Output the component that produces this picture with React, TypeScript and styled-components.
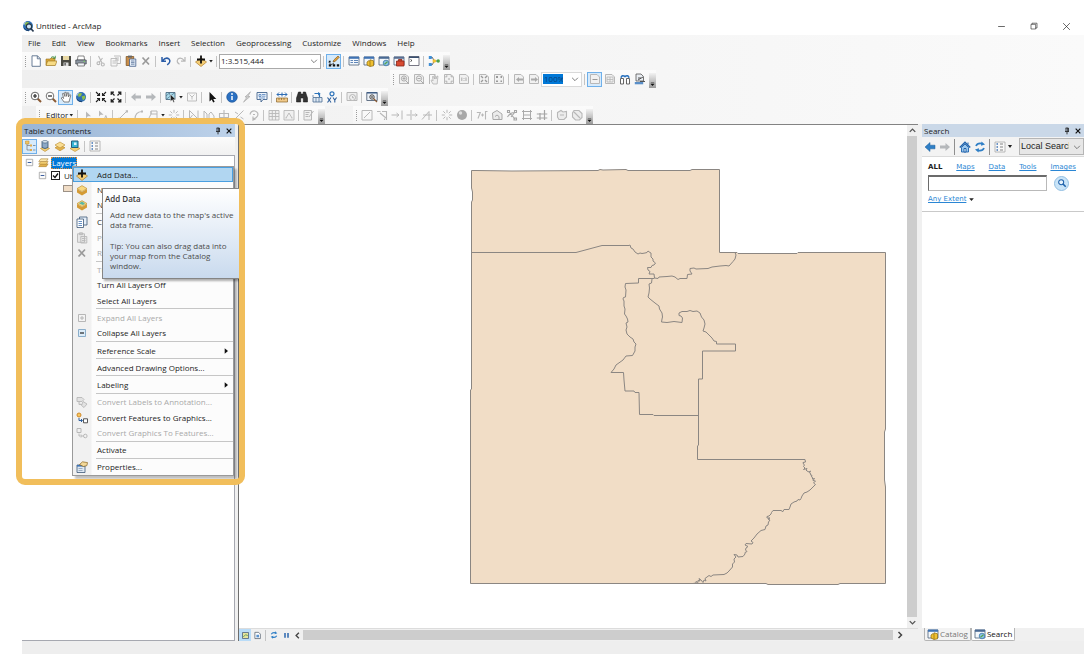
import React from "react";
import styled, { createGlobalStyle, css } from "styled-components";

const UI = `"Open Sans", "Noto Sans", sans-serif`;
const BLUE = "#0078d7";
const G = "#b8b8b8";

const Global = createGlobalStyle`
  *, *::before, *::after { box-sizing: border-box; }
  html, body { margin: 0; background: #fff; }
  body { font: 8px/12px ${UI}; color: #1c1c1c; overflow: hidden; }
  button, input, select { font: inherit; color: inherit; margin: 0; padding: 0; border: 0; background: none; }
  svg { display: block; flex: none; }
`;

/* ---------- icons, all drawn on a 12 x 12 grid ---------- */

const layer = (y: number, fill = "#f3cf73") => (
  <path d={`M1 ${y} L6 ${y - 3} L11 ${y} L6 ${y + 3}Z`} fill={fill} stroke="#b98a2c" strokeWidth=".6" />
);
const win = (c = "#3f73b4") => (
  <>
    <path d="M1 2h10v8H1z" fill="#f4f8fc" stroke="#4b5f7a" strokeWidth=".8" />
    <path d="M1 1.6h10v2.2H1z" fill={c} />
  </>
);
const greyPage = <path d="M1.5 1.5h6.5l2.5 2.5v6.5h-9z" fill="#f1f1f1" stroke={G} />;
const globe = (
  <>
    <circle cx="6" cy="6" r="5" fill="#2f6fb5" />
    <path d="M3 3.2Q5 1.4 7 2.4L6 5 3.6 6zM6.6 5.6l3.2-1.2.6 2.6-2.4 2.6z" fill="#8fbf4a" />
    <path d="M1.8 8Q3.500 10.800 7 10.800" stroke="#173f6e" strokeWidth="1" fill="none" />
    <path d="M4 1.6Q2 3 1.8 5" stroke="#cfe2f5" strokeWidth=".8" fill="none" />
  </>
);

const icons: Record<string, React.ReactNode> = {
  newDoc: <path d="M2 .8h5.5L10.300 3.600v7.700H2zM7.300 .8v3h3" fill="#fff" stroke="#5a6f8c" strokeWidth=".9" />,
  open: (
    <>
      <path d="M1 4h4l1-1h4v7H1z" fill="#d9a93b" stroke="#97701c" strokeWidth=".6" />
      <path d="M1 10.500 2.600 6H12l-1.700 4.500z" fill="#f8dc86" stroke="#97701c" strokeWidth=".6" />
      <path d="M6 2.500Q8 .8 9.500 2.400M10.300 .8v2.400H8" fill="none" stroke="#2c8a3c" strokeWidth=".8" />
    </>
  ),
  save: (
    <>
      <path d="M1 1h10v10H1z" fill="#4a4a43" />
      <path d="M3 1h6v4H3z" fill="#e9d9a4" />
      <path d="M3.500 7.500h5V11h-5z" fill="#dedede" />
      <path d="M4.500 8h1.200v2.500H4.500z" fill="#444" />
    </>
  ),
  print: (
    <>
      <path d="M3 1h6l.6 4H2.400z" fill="#fff" stroke="#555" strokeWidth=".7" />
      <path d="M.8 5h10.400v4H.8z" fill="#8d98a4" stroke="#4a4f55" strokeWidth=".8" />
      <path d="M2.600 8h6.800v3H2.600z" fill="#f3f6fa" stroke="#555" strokeWidth=".7" />
      <path d="M8.500 6.300h1.500" stroke="#79d35c" />
    </>
  ),
  cut: (
    <g fill="none" stroke={G} strokeWidth="1.100">
      <path d="M3.500 1 7 8M7.500 3 4 7.500" /><circle cx="3.400" cy="8.200" r="1.400" /><circle cx="7.800" cy="9.500" r="1.500" />
    </g>
  ),
  copyGrey: <path d="M1 3.500h6v7.500H1zM4 1h6.500v7.500H7M5 3h4M5 5h4M2.500 6H6M2.500 8H6" fill="none" stroke={G} strokeWidth=".9" />,
  paste: (
    <>
      <path d="M1.200 1.500h7.500v9H1.200z" fill="#c98e4a" stroke="#7d5526" strokeWidth=".8" />
      <path d="M3 .6h4v2H3z" fill="#666" />
      <path d="M4.500 4h6.300v7.300H4.500z" fill="#e8f0fa" stroke="#44608a" strokeWidth=".8" />
      <path d="M6 6h3.500M6 7.600h3.500M6 9.200h3.500" stroke="#44608a" strokeWidth=".7" />
    </>
  ),
  pasteGrey: <path d="M1.500 1.800h7v8.500h-7zM3.500 .8h3v1.800h-3zM4.800 4.500h6v6.500h-6zM6 6.500h3.500M6 8.500h3.500" fill="#e6e6e6" stroke={G} strokeWidth=".9" />,
  remove: <path d="M2.500 2.500l6.500 7M9 2.500l-6.500 7" stroke="#9a9a9a" strokeWidth="1.700" />,
  undo: <path d="M2 2v4.200h4M2.500 5.800Q6 1.600 9 4q2.400 2.800-1.800 5.800" fill="none" stroke="#2b5da8" strokeWidth="1.500" />,
  redo: <path d="M10 2v4.200H6M9.500 5.800Q6 1.600 3 4 .8 6.800 4.500 9.300" fill="none" stroke={G} strokeWidth="1.200" />,
  addData: (
    <>
      <path d="M.5 7 6 3l5.500 4L6 11.500z" fill="#f5ce76" stroke="#b17c26" strokeWidth=".7" />
      <path d="M6 .5v8M2 4.500h8" stroke="#111" strokeWidth="1.800" />
    </>
  ),
  editorBar: (
    <>
      <path d="M1 7.500 3 9.500 6 8.500" fill="none" stroke="#333" strokeWidth=".8" />
      <path d="M.8 9.200h2.400v2.200H.8zM4.800 9.200h2.400v2.200H4.800zM8.800 9.200h2.400v2.200H8.800zM.8 5.800h1.800v1.800H.8z" fill="#111" />
      <path d="M5 7 5.800 5 10 1l1.300 1.200L7.200 6.400z" fill="#e8a33a" stroke="#6b4a18" strokeWidth=".6" />
    </>
  ),
  tocWin: <>{win()}<path d="M2.500 5.500h2.500M6 5.500h4M2.500 7.500h2.500M6 7.500h4" stroke="#5f86b9" /></>,
  catalogWin: (
    <>
      {win()}
      <path d="M4 7l2-1.500 1 .8V4.800l3.500 1v5L7 11.500 4 10z" fill="#f0c132" stroke="#8c6a10" strokeWidth=".7" />
      <path d="M7 6.500v4.800" stroke="#8c6a10" strokeWidth=".7" />
    </>
  ),
  searchWin: <>{win("#4a6a94")}<circle cx="8" cy="8" r="2.800" fill="#8cc4e8" stroke="#3f78a8" strokeWidth=".8" /><path d="M6.500 9.200l3-2.500" stroke="#5aa34c" strokeWidth="1.200" /></>,
  toolbox: <>{win("#5a6f92")}<path d="M3.500 6h7.500v5H3.500zM5.500 6V4.500h3.500V6" fill="#d84b32" stroke="#8a2416" strokeWidth=".8" /></>,
  python: <><path d="M1 1.500h10v9H1z" fill="#fff" stroke="#556" strokeWidth=".8" /><path d="M1 1.500h10v1.500H1z" fill="#39506f" /><path d="M2.500 4.500 4 5.500 2.500 6.500" fill="none" stroke="#222" strokeWidth=".8" /></>,
  model: (
    <>
      <path d="M2.500 2.500h2L6 6 4.500 9.500h-2M6 6h4" fill="none" stroke="#444" strokeWidth=".8" />
      <path d="M.8 1h3v3h-3zM.8 8h3v3h-3z" fill="#3f8fd6" /><circle cx="6.300" cy="6" r="1.800" fill="#f0c132" /><circle cx="10.200" cy="6" r="1.700" fill="#4fa045" />
    </>
  ),
  zoomIn: <><path d="M7.500 7.500 11 11" stroke="#8a5a34" strokeWidth="1.900" /><circle cx="5" cy="5" r="3.800" fill="#fff" stroke="#555" strokeWidth=".9" /><path d="M5 3v4M3 5h4" stroke="#222" strokeWidth="1.200" /></>,
  zoomOut: <><path d="M7.500 7.500 11 11" stroke="#8a5a34" strokeWidth="1.900" /><circle cx="5" cy="5" r="3.800" fill="#fff" stroke="#666" strokeWidth=".9" /><path d="M3 5h4" stroke="#222" strokeWidth="1.200" /></>,
  pan: <path d="M4 11 1.200 7 2.300 6.300 3.600 7.500 2.500 2.600l1.300-.3L5 5.500 4.800 1.300h1.400L6.600 5.300 7.500 1.700l1.300.3L8.400 6 9.800 3.600l1 .6L9.500 9 9 11z" fill="#fff" stroke="#666" strokeWidth=".8" />,
  globe,
  fixedIn: <path d="M1 1l3 3M11 1 8 4M1 11l3-3M11 11 8 8M4.500 2v2.500H2M7.500 2v2.500H10M4.500 10V7.500H2M7.500 10V7.500H10" fill="none" stroke="#222" strokeWidth="1.100" />,
  fixedOut: <path d="M1.500 1.500l3 3M10.500 1.500l-3 3M1.500 10.500l3-3M10.500 10.500l-3-3M1.200 4V1.200H4M8 1.200h2.800V4M1.200 8v2.800H4M8 10.800h2.800V8" fill="none" stroke="#222" strokeWidth="1.200" />,
  back: <path d="M1 6l4.500-4v2.500H11v3H5.500V10z" fill="#b5b8bb" />,
  fwd: <path d="M11 6 6.500 2v2.500H1v3h5.500V10z" fill="#b5b8bb" />,
  backBlue: <path d="M1 6l5-4.500v2.700h5v3.600H6v2.700z" fill="#2f7fc6" stroke="#1b5c98" strokeWidth=".5" />,
  selFeat: <><path d="M1 1.500h9v7H1z" fill="#a9dcec" stroke="#4d6d85" strokeWidth=".9" /><path d="M1 5 5 1.500M1 8.500 10 1.500M4 1.500l3 7" stroke="#4d6d85" strokeWidth=".7" /><path d="M5.500 3.500v7l1.800-1.700 1.200 2.700 1-.5-1-2.500h2.300z" fill="#222" stroke="#fff" strokeWidth=".4" /></>,
  clearSel: <path d="M1.500 2h9v8h-9zM3.500 3.500 6 6l2.500-2.500M6 6v2.500" fill="none" stroke={G} strokeWidth=".9" />,
  pointer: <path d="M3.500 1v9.500L5.700 8.400 7.200 11.500l1.500-.7L7.300 7.900h3z" fill="#111" />,
  info: <><circle cx="6" cy="6" r="5.300" fill="#2a70c2" stroke="#174d8e" strokeWidth=".6" /><path d="M6 5v4" stroke="#fff" strokeWidth="1.500" /><circle cx="6" cy="3" r=".9" fill="#fff" /></>,
  bolt: <path d="M9.500 .8 4 6h2L2.500 11.200 9 5.500H6.800z" fill="#d2d2d2" stroke="#a2a2a2" strokeWidth=".6" />,
  popup: <><path d="M1 1.500h10v7H7l-2 2.500V8.500H1z" fill="#eef4fb" stroke="#456690" strokeWidth=".9" /><path d="M3 3.500h2v2H3zM6 3.500h3.500M6 5.200h3.500M3 7h6" stroke="#3f73b4" fill="none" strokeWidth=".7" /></>,
  measure: <><path d="M.5 7h11v4H.5z" fill="#f0c98a" stroke="#8a6428" strokeWidth=".7" /><path d="M3 7v2M5.500 7v2M8 7v2" stroke="#8a6428" strokeWidth=".7" /><path d="M1 3.500h10M3 1.500l-2 2 2 2M9 1.500l2 2-2 2M6 1.500v4" fill="none" stroke="#2e6db5" /></>,
  binoc: <path d="M2.500 1h2.300v2h2.400V1h2.300l2 6v4H7.300V7H4.700v4H.5V7z" fill="#333" stroke="#111" strokeWidth=".5" />,
  route: <><path d="M3.500 2.500h5V6" fill="none" stroke="#2d74bb" strokeWidth="1.200" /><path d="M7 1l2.500 1.500L7 4.500" fill="#2d74bb" /><path d="M2 6.500h9v4.500H2z" fill="#dfeaf5" stroke="#4b6d93" strokeWidth=".8" /><path d="M5 6.500V11M8 6.500V11M2 4v2" stroke="#4b6d93" strokeWidth=".7" /></>,
  gotoXY: <><circle cx="6" cy="2.800" r="2" fill="none" stroke="#2d74bb" strokeWidth="1.200" /><path d="M1.500 6.500l3.500 5M5 6.500l-3.500 5M7 6.500 8.800 9l1.800-2.500M8.800 9v2.500" fill="none" stroke="#2d5f9c" strokeWidth="1.100" /></>,
  timeGrey: <><path d="M1 1.500h10v8H1z" fill="#eee" stroke={G} /><circle cx="6.500" cy="6.500" r="3" fill="#eee" stroke={G} /><path d="M6.500 5v1.800H8" fill="none" stroke={G} /></>,
  viewer: <><path d="M.8 1.500h10.400v8H.8z" fill="#edf2f8" stroke="#55657b" strokeWidth=".9" /><path d="M.8 1.200h10.400v1.300H.8z" fill="#3b5a85" /><circle cx="6" cy="6" r="2.200" fill="#fff" stroke="#333" strokeWidth=".9" /><path d="M6 4.800v2.400M4.800 6h2.400" stroke="#333" strokeWidth=".7" /><path d="M7.500 7.500 11 11" stroke="#8a5a34" strokeWidth="1.300" /></>,
  pageZoomIn: <>{greyPage}<circle cx="6" cy="5.500" r="2.600" fill="none" stroke="#aaa" /><path d="M6 4v3M4.500 5.500h3M8 8l3 3" stroke="#aaa" /></>,
  pageZoomOut: <>{greyPage}<circle cx="6" cy="5.500" r="2.600" fill="none" stroke="#aaa" /><path d="M4.500 5.500h3M8 8l3 3" stroke="#aaa" /></>,
  pagePan: <><path d="M1.500 11V1.500h6" fill="none" stroke={G} /><path d="M5 11 3 7.500l1-.6 1 1L4.500 3.500h1L6.500 6 6.300 2.500h1L8 6l1-3 1 .3L9.500 7l-.3 4z" fill="#eee" stroke="#aaa" strokeWidth=".7" /></>,
  pageFull: <>{greyPage}<path d="M3 4.500V3h1.500M7.500 3H9v1.500M3 7.500V9h1.500M7.500 9H9V7.500M5 6h2" fill="none" stroke="#aaa" /></>,
  page11: <>{greyPage}<path d="M3.800 4.500v3.500M8 4.500v3.500M6 5.200v.8M6 7v.8" stroke="#aaa" /></>,
  pageIn: <>{greyPage}<path d="M3 3l2 2M9 3 7 5M3 9l2-2M9 9 7 7" stroke="#999" strokeWidth="1.300" /></>,
  pageOut: <>{greyPage}<path d="M3 3h2v2H3zM7.500 3h1.500v2H7.500zM3 7.500h2V9H3zM7.500 7.500H9V9H7.500z" fill="#999" /></>,
  pageBack: <>{greyPage}<path d="M3 6.500l3-2.500v1.500h4v2H6V9z" fill="#aaa" /></>,
  pageFwd: <>{greyPage}<path d="M10 6.500 7 4v1.500H3v2h4V9z" fill="#aaa" /></>,
  draft: <>{greyPage}<path d="M3.500 6.500h5" stroke="#999" /></>,
  focus: <>{greyPage}<path d="M3 4h6v5H3zM3 6.500h6M6 4v5" fill="none" stroke={G} strokeWidth=".8" /></>,
  layoutSwap: <><path d="M1.500 11V5.500h3V11zM7.500 11V5.500h3V11z" fill="#fff" stroke="#555" strokeWidth=".9" /><path d="M2 4.800Q3 1.500 6 3.500 9 1.500 10 4.800" fill="none" stroke="#2a72be" strokeWidth="1.600" /></>,
  ddp: <><path d="M2 1h5l2.500 2.500V8H2z" fill="#e9edf2" stroke="#555" strokeWidth=".8" /><path d="M.8 9h8.400v2.300H.8z" fill="#5a8fc8" /><path d="M4 7l5-3M6 8.500h5M4 5h3" stroke="#555" /></>,
  eTool: <path d="M4 2.500v7l1.800-2.200H9z" fill={G} />,
  eToolA: <><path d="M2 1.500v6l1.600-1.800h3z" fill={G} /><path d="M7 11l1.800-4.500L10.600 11M7.500 9.500h2.500" fill="none" stroke={G} /></>,
  line: <><path d="M2.500 9.500l7-7" stroke={G} /><path d="M1.200 8.800h2.200V11H1.200zM8.800 1.200H11v2.200H8.800z" fill={G} /></>,
  arc: <><path d="M3 10Q3 3 10 2.500" fill="none" stroke={G} strokeWidth="1.100" /><path d="M2 9h2v2H2zM9 1.500h2v2H9z" fill={G} /></>,
  trace: <path d="M1 10h9V2H4v3L1.500 10M4 2v3h6M2 9v2M10 9v2" fill="none" stroke={G} />,
  burst: <path d="M6 .8v3M6 8.200v3M.8 6h3M8.200 6h3M2.300 2.300l2 2M7.700 7.700l2 2M9.700 2.300l-2 2M4.300 7.700l-2 2" stroke={G} />,
  editVert: <path d="M1.500 11V1.500L10 10V1.500M4.500 6 1.500 10H10" fill="none" stroke={G} />,
  reshape: <path d="M1 10.500V2l3 3v5.500M6 10.500V5l2-2 3 4v3.500" fill="none" stroke={G} />,
  cutPoly: <path d="M1.500 4.500h9v4h-9zM6 1v10.500" fill="none" stroke={G} strokeWidth="1.100" />,
  split: <path d="M1.500 10.500l9-9M2 3l3 2M7.500 8l3 2" stroke={G} />,
  rotate: <path d="M2 5.500Q3 1.500 7 2q4 1.500 2.500 5Q8 10 5 9.500M5 7.500v3.500L8 9.500M5 5.500h2" fill="none" stroke={G} strokeWidth="1.200" />,
  table: <path d="M1 1.500h10v9.500H1zM1 4.500h10M1 7.500h10M4.300 1.500V11M7.600 1.500V11" fill="#f0f0f0" stroke={G} strokeWidth=".9" />,
  sketchProp: <path d="M1 1.500h10v9.500H1zM3 9l3-5 3 5M2.500 9h1M8.500 9h1" fill="#f0f0f0" stroke={G} strokeWidth=".9" />,
  createFeat: <path d="M1 1.500h7.500v9.500H1zM2.500 3.500h4M2.500 5.500h3M2.500 7.500h3M6 8l4.500-6" fill="#f0f0f0" stroke={G} />,
  t1: <path d="M1 1.500h10v9.500H1zM3 9l6-6" fill="none" stroke={G} />,
  t2: <path d="M1 2.500h3.500M6 2.500h4.500V11M8.500 9.500V11M4 4l6 5" fill="none" stroke={G} strokeWidth="1.100" />,
  t3: <path d="M.5 6h7M5.500 4l2.500 2-2.500 2M11 1.500v9" fill="none" stroke={G} />,
  t4: <path d="M5 1v10M.5 6h4M6 6h5.500M9.500 4.500 11 6 9.500 7.500" fill="none" stroke={G} />,
  t5: <path d="M1 10.500l7-8M2 6h9M8 2.500V11" fill="none" stroke={G} />,
  sphere: <><circle cx="6" cy="6" r="5" fill="#a8a8a8" /><circle cx="4.500" cy="4" r="1.700" fill="#dedede" /></>,
  text7: <path d="M.8 3.500h3.500L2 9.500M5 6h3M6.500 4.500v3M11.500 2.500H9.500v8" fill="none" stroke={G} strokeWidth="1.100" />,
  bookA: <path d="M1.500 4 6 1.500 11 5v5.500H2zM4 7.500q2-3 4 0v3" fill="#ececec" stroke="#aaa" />,
  nodes: <path d="M1.500 1.500h2v2h-2zM8.500 1.500h2v2h-2zM8 9h2.500v2H8zM3 3l6 7M9 3 5 8M1.500 8q3-5 8-4.500" fill="none" stroke="#a5a5a5" strokeWidth="1.100" />,
  rect4: <path d="M2.500 1v10M9.500 1v10M1 2.500h10M1 9.500h10M3 6h6" fill="none" stroke="#aaa" />,
  hash: <path d="M4 4v7M8.500 1v10M.8 5h10.500M.8 9h10.500" fill="none" stroke="#a5a5a5" strokeWidth="1.200" />,
  poly1: <path d="M1.500 3.500 5 1.500l2 1.500 3.500-.5V8L8 10.500H3L1.500 8zM4 6h4" fill="#ececec" stroke={G} strokeWidth="1.100" />,
  poly2: <path d="M3 1.500h5l3 3v4L8.500 11h-4L1.500 8V4zM3 3l6 6" fill="#ececec" stroke={G} strokeWidth="1.100" />,
  listOrder: <><path d="M3 3v7h3M3 5.500h3" fill="none" stroke="#777" strokeWidth=".7" /><path d="M1.500 1h3.500v3H1.500z" fill="#f0c468" stroke="#b98a2c" strokeWidth=".5" /><path d="M6 4.500h2v2H6zM6 9h2v2H6z" fill="#e0a94c" /><path d="M9 5.500h2.500M9 10h2.500" stroke="#7c93ac" /></>,
  listSource: <><path d="M1.500 8.500 6 6l4.500 2.500L6 11.500z" fill="#f3cf73" stroke="#b98a2c" strokeWidth=".6" /><path d="M3 1.500h6v6Q6 9.500 3 7.500z" fill="#8da9c6" stroke="#33506f" strokeWidth=".8" /><ellipse cx="6" cy="1.800" rx="3" ry="1.200" fill="#e8f2fa" stroke="#33506f" strokeWidth=".6" /></>,
  listVis: <>{layer(7.800, "#e2b24d")}{layer(5, "#f9dd92")}</>,
  listSel: <><path d="M1 8.500 6 6l5 2.500-5 3z" fill="#f3cf73" stroke="#b98a2c" strokeWidth=".6" /><path d="M2.500 1H9v6.500H2.500z" fill="#38b6d4" stroke="#245e7d" /><path d="M5 2.500h2.500v2.500H5z" fill="#dff3fa" /></>,
  options: <><path d="M1 1h10v10H1z" fill="#f8f8f8" stroke="#a8a8a8" strokeWidth=".8" /><path d="M2.500 3h1.500M2.500 6h1.500M2.500 9h1.500" stroke="#3f73b4" strokeWidth="1.400" /><path d="M6 3h3M6 6h3M6 9h3" stroke="#777" strokeWidth=".9" /></>,
  layers: <><path d="M.8 10.500 3 7.500h8l-2 3z" fill="#e2b24d" stroke="#a67a2a" strokeWidth=".6" /><path d="M.8 7.800 3 4.800h8l-2 3z" fill="#f3cf73" stroke="#a67a2a" strokeWidth=".6" /><path d="M.8 5 3 2h8L9 5z" fill="#fbe6aa" stroke="#a67a2a" strokeWidth=".6" /></>,
  groupLayer: <><path d="M1 5 6 8v3.500L1 8.500zM11 5 6 8v3.500l5-3z" fill="#d49b35" />{layer(4.600, "#f8d880")}</>,
  baseLayer: <><path d="M1 5 6 8v3.500L1 8.500zM11 5 6 8v3.500l5-3z" fill="#d49b35" />{layer(4.600, "#f8d880")}<path d="M3 4.600l3-2 3 1.800-2 1.500z" fill="#58b6a6" /></>,
  copy: <><path d="M3.500 1H11v8H3.500z" fill="#e5eef8" stroke="#3d5877" strokeWidth=".8" /><path d="M1 3h6.500v8.500H1z" fill="#fff" stroke="#3d5877" strokeWidth=".8" /><path d="M2.500 5.500H6M2.500 7.500H6M2.500 9.500H6" stroke="#3f73b4" strokeWidth=".8" /></>,
  plusBox: <path d="M2.500 2.500h7v7h-7zM6 4v4M4 6h4" fill="#f4f4f4" stroke="#b0b0b0" strokeWidth=".9" />,
  minusBox: <><path d="M2.500 2.500h7v7h-7z" fill="#dcecf8" stroke="#7fa6c6" strokeWidth=".9" /><path d="M4 6h4" stroke="#111" strokeWidth="1.100" /></>,
  treeBox: <><path d="M2.500 2.500h7v7h-7z" fill="#fafafa" stroke="#a3a3a3" strokeWidth=".9" /><path d="M4 6h4" stroke="#3b5fa0" strokeWidth="1.100" /></>,
  convLabel: <path d="M1 1.500h5l2 2-2 2H1zM3 5.500v3h3M7 5.500 11 8 8 11.500 5.500 9.500z" fill="#e2e2e2" stroke={G} strokeWidth=".9" />,
  convFeat: <><circle cx="3" cy="3" r="2" fill="#f8c860" stroke="#d0892a" /><path d="M3 6v2.500h3M5 7l1.500 1.500L5 10" fill="none" stroke="#2d5f9c" /><path d="M7.500 6.800h4v4h-4z" fill="#fff" stroke="#444" strokeWidth=".9" /></>,
  convGraph: <><path d="M1 1.500h4v4H1zM3 6.500v2.500h3M5 7.500 6.500 9 5 10.500" fill="none" stroke={G} /><circle cx="9.300" cy="9" r="1.800" fill="none" stroke={G} /></>,
  props: <><path d="M1 4h8v7.500H1z" fill="#dfe9f4" stroke="#3d5877" strokeWidth=".8" /><path d="M1 4h8v1.600H1z" fill="#3f73b4" /><path d="M2.500 7.500h4M2.500 9.500h4" stroke="#7c93ac" strokeWidth=".7" /><path d="M3.500 3.500 6.500 .8l5 .8-.6 3-3.400.9z" fill="#f3d99a" stroke="#8a6420" strokeWidth=".7" /></>,
  home: <><path d="M.8 6.500 6 1.200l5.200 5.300" fill="none" stroke="#1f63ac" strokeWidth="1.500" /><path d="M2.500 6.500 6 3l3.500 3.500V11h-7z" fill="#9cc8ee" stroke="#1f63ac" strokeWidth=".9" /><path d="M5 7.500h2V11H5zM9 1.500v2" fill="#fff" stroke="#1f63ac" /></>,
  refresh: <><path d="M2 5Q3.500 1.500 8 2.600" fill="none" stroke="#2f7fc6" strokeWidth="1.700" /><path d="M7.500 .5l3.500 3-4 1.300z" fill="#2f7fc6" /><path d="M10 7Q8.500 10.500 4 9.400" fill="none" stroke="#2f7fc6" strokeWidth="1.700" /><path d="M4.500 11.500 1 8.500l4-1.300z" fill="#2f7fc6" /></>,
  pause: <path d="M3 2.500h2v6.500H3zM7 2.500h2v6.500H7z" fill="#2a66ad" />,
  dataView: <><path d="M2 2h8v8H2z" fill="#e7e39b" stroke="#44597a" /><path d="M3 8l3-3 3 1" fill="none" stroke="#3d8a52" /></>,
  layoutView: <><path d="M2.500 1.800h5l2.300 2.300v6H2.500z" fill="#fff" stroke="#55606e" /><path d="M4.500 5h3.500v3.500H4.500z" fill="#5b93cf" /></>,
  find: <><circle cx="5" cy="5" r="3" fill="#e7f3fc" stroke="#1f63ac" strokeWidth="1.300" /><path d="M7.200 7.200 10.500 10.500" stroke="#1f63ac" strokeWidth="1.900" /></>,
  pin: <path d="M4 1.500h4M4.500 1.500v5M7.200 1.500v5M8 1.500v5M3 6.800h6M6 7v4" fill="none" stroke="#111" strokeWidth="1.200" />,
  close: <path d="M2.500 2.500l7 7M9.500 2.500l-7 7" stroke="#111" strokeWidth="1.800" />,
  winMin: <path d="M1.500 6h9" stroke="#222" strokeWidth=".9" />,
  winMax: <path d="M1.500 3.500h7v7h-7zM3 3.500V1.800h7.500V9H8.500" fill="none" stroke="#222" strokeWidth=".9" />,
  winClose: <path d="M1.500 1.500l9 9M10.500 1.500l-9 9" stroke="#222" strokeWidth=".9" />,
  up: <path d="M3 7.500l3-3 3 3" fill="none" stroke="#555" strokeWidth="1.500" />,
  down: <path d="M3 4.500l3 3 3-3" fill="none" stroke="#555" strokeWidth="1.500" />,
  drop: <path d="M2.500 4.500l3.500 3.500 3.500-3.500" fill="none" stroke="#666" strokeWidth="1" />,
  left: <path d="M7.500 3l-3 3 3 3" fill="none" stroke="#444" strokeWidth="1.500" />,
  right: <path d="M4.500 3l3 3-3 3" fill="none" stroke="#444" strokeWidth="1.500" />,
  triRight: <path d="M4 2v8l5-4z" fill="#111" />,
  triDown: <path d="M2 4h8L6 8.500z" fill="#222" />,
  overflow: <path d="M2 1.500h8M2 4.500h8L6 9z" fill="#111" stroke="#111" />,
  app: <>{globe}<circle cx="7" cy="6.500" r="2.600" fill="#cfe6f5" stroke="#26384e" strokeWidth="1.100" /><path d="M8.800 8.500 11.500 11.500" stroke="#26384e" strokeWidth="1.600" /></>,
};

const Icon = ({ n, s = 12 }: { n: string; s?: number }) => (
  <svg width={s} height={s} viewBox="0 0 12 12" aria-hidden="true">{icons[n]}</svg>
);

/* ---------- window frame ---------- */

const Window = styled.div`
  position: relative;
  display: flex;
  flex-direction: column;
  min-height: 100vh;
  padding: 17px 0 0 22px;
`;
const TitleBar = styled.header`
  display: flex;
  align-items: center;
  gap: 2px;
  height: 18px;
`;
const Title = styled.h1`
  flex: 1;
  margin: 0;
  font: inherit;
`;
const WinButtons = styled.div`
  display: flex;
  gap: 24px;
  padding-right: 13px;
`;
const PlainButton = styled.button`
  display: flex;
  align-items: center;
  justify-content: center;
  min-width: 8px;
`;
const Chrome = styled.div`
  background: linear-gradient(90deg, #efefef, #f4f4f4 40%, #fafafa);
`;
const MenuBar = styled.nav`
  display: flex;
  align-items: center;
  gap: 11px;
  height: 17px;
  padding: 0 0 2px 6px;
`;
const ToolRow = styled.div<{ $indent?: number }>`
  display: flex;
  height: 18px;
  padding-left: ${(p) => p.$indent ?? 0}px;
`;
const Bar = styled.div<{ $gap?: number }>`
  display: flex;
  align-items: center;
  margin-right: ${(p) => p.$gap ?? 0}px;
  background: linear-gradient(#fbfbfb, #f5f5f5);
`;
const Grip = styled.span`
  width: 2px;
  height: 11px;
  margin: 0 1px 0 3px;
  border-left: 1px dotted #9c9c9c;
`;
const Sep = styled.span<{ $tall?: boolean }>`
  width: 1px;
  height: ${(p) => (p.$tall ? 16 : 11)}px;
  margin: 0 2px;
  background: ${(p) => (p.$tall ? "#8f8f8f" : "#c4c4c4")};
`;
const ToolButton = styled.button<{ $on?: boolean }>`
  display: flex;
  align-items: center;
  justify-content: center;
  width: 15px;
  height: 15px;
  ${(p) => p.$on && css`background: #d6eafb; box-shadow: inset 0 0 0 1px #6fb0ea;`}
`;
const Caret = styled.span`
  width: 6px;
  height: 3px;
  background: #222;
  clip-path: polygon(15% 0, 85% 0, 50% 100%);
`;
const Overflow = styled.button`
  display: flex;
  align-items: flex-end;
  justify-content: center;
  align-self: flex-end;
  width: 7px;
  height: 15px;
  margin-left: 2px;
  padding-bottom: 1px;
  background: linear-gradient(#f2f2f2, #9a9a9a);
`;
const Combo = styled.span<{ $w: number }>`
  position: relative;
  display: flex;
  align-items: center;
  width: ${(p) => p.$w}px;
  height: 15px;
  border: 1px solid #a9a9a9;
  background: #fff;
  svg { position: absolute; right: 1px; pointer-events: none; }
`;
const PageCombo = styled(Combo)`
  border-color: #d9d9d9;
`;
const Select = styled.select`
  appearance: none;
  width: 100%;
  height: 12px;
  padding-left: 1px;
  line-height: 12px;
`;
const ZoomSelect = styled(Select)`
  width: 20px;
  height: 10px;
  margin-left: 1px;
  line-height: 10px;
  background: ${BLUE};
  color: #0b3f78;
`;
const EditorButton = styled.button`
  display: flex;
  align-items: center;
  width: 33px;
  padding-left: 4px;
`;

const Tools = ({ list }: { list: string }) => (
  <>
    {list.split(" ").map((t, i) =>
      t === "|" ? <Sep key={i} /> : t === "v" ? <Caret key={i} /> : (
        <ToolButton key={i} type="button" aria-label={t.replace("*", "")} $on={t.endsWith("*")}>
          <Icon n={t.replace("*", "")} />
        </ToolButton>
      )
    )}
  </>
);
const More = () => <Overflow type="button" aria-label="Toolbar options"><Icon n="overflow" s={5} /></Overflow>;

/* ---------- panels ---------- */

const Body = styled.main`
  display: flex;
  flex: 1;
  background: #f0f0f0;
`;
const Dock = styled.section<{ $w: number }>`
  position: relative;
  display: flex;
  flex: none;
  flex-direction: column;
  width: ${(p) => p.$w}px;
`;
const PanelHead = styled.header<{ $light?: boolean }>`
  display: flex;
  align-items: center;
  gap: 3px;
  height: 13px;
  padding: 0 2px;
  background: ${(p) => (p.$light ? "#cad8e8" : "linear-gradient(90deg, #9ab5d5, #bdd2ea)")};
`;
const PanelTitle = styled.h2`
  flex: 1;
  margin: 0;
  font: inherit;
`;
const TocTools = styled.div`
  display: flex;
  align-items: center;
  height: 18px;
  background: linear-gradient(#fbfbfb, #f1f1f1);
`;
const Tree = styled.div`
  flex: 1;
  border: 1px solid #a6a8b0;
  border-left: 0;
  background: #fff;
`;
const TreeRow = styled.div<{ $level: number }>`
  display: flex;
  align-items: center;
  gap: 3px;
  height: 13px;
  padding-left: ${(p) => p.$level * 13 + 2}px;
`;
const NodeName = styled.span<{ $on?: boolean }>`
  ${(p) => p.$on && css`margin-left: -1px; padding: 0 1px; background: ${BLUE}; color: #fff; outline: 1px dotted #d98b3a; outline-offset: -1px;`}
`;
const Check = styled.input`
  appearance: none;
  width: 9px;
  height: 9px;
  margin: 0 4px 0 0;
  border: 1px solid #222;
  background: #fff;
`;
const CheckWrap = styled.label`
  position: relative;
  display: flex;
  align-items: center;
  svg { position: absolute; left: 0; }
`;
const Swatch = styled.span`
  width: 11px;
  height: 7px;
  border: 1px solid #9c9186;
  background: #f1ddc6;
`;

const Highlight = styled.div`
  position: absolute;
  z-index: 3;
  top: -6px;
  left: -6px;
  right: -10px;
  height: 367px;
  border: 6px solid #f1be5b;
  border-radius: 9px;
  pointer-events: none;
`;
const ContextMenu = styled.div`
  position: absolute;
  z-index: 1;
  top: 42px;
  left: 50px;
  display: flex;
  flex-direction: column;
  width: 162px;
  height: 310px;
  border: 1px solid #9a9a9a;
  background: linear-gradient(90deg, #f1f1f1 18px, #fcfcfc 19px);
  box-shadow: 3px 3px 2px #00000040;
`;
const MenuItem = styled.button<{ $hover?: boolean }>`
  display: flex;
  flex: 1;
  align-items: center;
  gap: 9px;
  padding: 0 3px;
  text-align: left;
  white-space: nowrap;
  &:disabled { color: #a9a9a9; }
  ${(p) => p.$hover && css`background: #b1d6f1; box-shadow: inset 0 0 0 1px #4a9fe0;`}
`;
const MenuLabel = styled.span`
  flex: 1;
`;
const MenuIcon = styled.span`
  width: 12px;
`;
const MenuSep = styled.hr`
  flex: none;
  width: 137px;
  height: 2px;
  margin: 0 0 0 auto;
  border: 0;
  border-top: 1px solid #c6c6c6;
`;
const Tooltip = styled.div`
  position: absolute;
  z-index: 2;
  top: 64px;
  left: 80px;
  width: 139px;
  height: 91px;
  padding: 4px 2px;
  border: 1px solid #858585;
  background: linear-gradient(#fff, #c9daee);
  box-shadow: 2px 2px 2px #00000050;
  color: #4c4c4c;
  line-height: 10px;
  white-space: nowrap;
  h3 { margin: 0 0 6px; font: 600 8px/11px ${UI}; color: #383838; }
  p { margin: 0 0 11px 5px; }
`;

const MapFrame = styled.section`
  display: grid;
  flex: 1;
  min-width: 0;
  grid-template: 1fr 13px / 1fr 11px;
  margin: 0 4px 0 3px;
  border-top: 1px solid #838383;
  border-left: 1px solid #6e6e6e;
`;
const Canvas = styled.div`
  display: flex;
  min-height: 0;
  background: #fff;
  svg { width: 100%; height: 100%; }
`;
const VScroll = styled.div`
  display: flex;
  flex-direction: column;
  align-items: center;
  background: #f0f0f0;
`;
const Thumb = styled.span`
  flex: 1;
  align-self: stretch;
  margin-right: 1px;
  background: #cdcdcd;
`;
const HScroll = styled.div`
  display: flex;
  grid-column: 1 / -1;
  align-items: center;
  padding-right: 12px;
  border-top: 1px solid #dcdcdc;
  background: #f0f0f0;
`;
const ViewButton = styled.button<{ $on?: boolean }>`
  display: flex;
  align-items: center;
  justify-content: center;
  width: 12px;
  height: 12px;
  ${(p) => p.$on && css`background: #b9dcf8;`}
`;
const HThumb = styled(Thumb)`
  height: 10px;
  align-self: center;
`;

const SearchTools = styled.div`
  display: flex;
  align-items: center;
  height: 20px;
  border-bottom: 1px solid #dadada;
  background: #f3f3f3;
`;
const SourceCombo = styled(Combo)`
  flex: 1;
  height: 17px;
  margin-left: 6px;
  border-color: #b5b5b5;
  background: #e7e7e7;
  font: 9px/15px "Liberation Sans", Arial, sans-serif;
`;
const SourceSelect = styled(Select)`
  width: 49px;
  height: 15px;
  line-height: 15px;
`;
const SearchBody = styled.div`
  flex: 1;
  background: #fff;
  font: 7px/11px "DejaVu Sans", Verdana, sans-serif;
`;
const SearchForm = styled.form`
  padding: 5px 8px 6px 6px;
  border-bottom: 1px solid #c9c9c9;
  a { color: #2a86d4; }
`;
const Scopes = styled.div`
  display: flex;
  justify-content: space-between;
  margin-bottom: 2px;
`;
const QueryRow = styled.div`
  display: flex;
  align-items: center;
  gap: 7px;
  margin-bottom: 3px;
`;
const Query = styled.input`
  flex: 1;
  min-width: 0;
  height: 16px;
  border: 1px solid #b9b9b9;
  border-top: 2px solid #6b6b6b;
  border-left-color: #6b6b6b;
`;
const Go = styled.button`
  display: flex;
  align-items: center;
  justify-content: center;
  width: 15px;
  height: 15px;
  margin-right: 7px;
  border: 1px solid #93bfe2;
  border-radius: 50%;
  background: #c9e4f8;
`;
const Extent = styled.div`
  display: flex;
  align-items: center;
  gap: 2px;
`;
const Tabs = styled.div`
  display: flex;
  height: 13px;
  padding-left: 2px;
`;
const Tab = styled.button<{ $on?: boolean }>`
  display: flex;
  align-items: center;
  gap: 1px;
  padding: 0 2px;
  border: 1px solid #b5b5b5;
  border-top: 0;
  border-radius: 0 0 2px 2px;
  background: ${(p) => (p.$on ? "#fff" : "#f3f3f3")};
  color: ${(p) => (p.$on ? "#111" : "#777")};
`;
const StatusBar = styled.footer`
  height: 13px;
  background: #eeeeee;
`;

/* ---------- data ---------- */

type Item = { t: string; i?: string; off?: boolean; sub?: boolean };
const menu: Item[][] = [
  [{ t: "Add Data...", i: "addData" }, { t: "New Group Layer", i: "groupLayer" }, { t: "New Basemap Layer", i: "baseLayer" }],
  [{ t: "Copy", i: "copy" }, { t: "Paste Layer(s)", i: "pasteGrey", off: true }, { t: "Remove", i: "remove", off: true }],
  [{ t: "Turn All Layers On", off: true }, { t: "Turn All Layers Off" }, { t: "Select All Layers" }],
  [{ t: "Expand All Layers", i: "plusBox", off: true }, { t: "Collapse All Layers", i: "minusBox" }],
  [{ t: "Reference Scale", sub: true }],
  [{ t: "Advanced Drawing Options..." }],
  [{ t: "Labeling", sub: true }],
  [
    { t: "Convert Labels to Annotation...", i: "convLabel", off: true },
    { t: "Convert Features to Graphics...", i: "convFeat" },
    { t: "Convert Graphics To Features...", i: "convGraph", off: true },
  ],
  [{ t: "Activate" }],
  [{ t: "Properties...", i: "props" }],
];

/* Utah's outline and the district borders inside it */
const outline =
  "M471.500 170.500L476 170.500 512 171 598 170.500 600 169.500 603 170 626 169.500 628 170.500 690 170.500 692 169.500H719.500V252.500H737L738 253.500H797L798 252.500H885.500V429L884.500 432V480L885.500 487V583.500H840L838 584.500H768L766 583.500H470.500V390L471.500 389V202L472.500 200V192L471.500 188Z";
const borders = [
  "M471.500 252.500H576L589 249 602 245.500 629 245.500 630 245 631 248 633 249 635 252 638 254 640 253 642 253.500 645 253 647 252.500 648 251 650 252.500 651 253 651 257 653 259 653 261 655.500 263 654 265 652 265.500 651 267.500 647.500 267.500 648 270 650 271.500 649 274 654 274 654.500 278 658 278.500 659 277 667 276.500 672 276 675 277 678 279.500 680 278.500 687 278.500 687.500 274.500 692 274 690 271 690 268.500 694 268 696 269 708 268.500 712 267 720 266 726 265.500 729 266 733 261.500 735 259 736 255 735 252.500",
  "M654.500 278.500H638.500V283L625.500 283.500 625 287 626 290 625.500 297 623.500 297.500 623 299 624 301 624 306 625 309 624.500 314 626 316 627.500 319 628 322 626 323 627 327 626 330 627 334 630 337 633 339 634 342 636 344 635 347 635 351 632.500 355.500 626 356 623 360 616 365 614 369 611 372.500 623.500 372.500 624 380 625 391 634 391 635 392.500 639 392.500 639.500 414.500 653 414.500 654 415.500H698.500",
  "M652 279 651.500 283 649 284 649.500 288 649 293 648 297 650 299 655 303 659 306 659.500 309 662 313 662.500 317 662 319 661.500 322 667 322.500 674 321.500 682 322.500 682.500 318 681 316 679 315.500 679 313 682 311.500 687 311.500 690 310.500 693 311.500 697 311 700 313 701.500 317 704 320 705 324 704 328 703 331 706 332 709 335 712 338 714 341 716.500 341.500V344H735.500V351H702.500V379H698.500V445L697.500 446V459.500H805",
  "M805 459.500 805.500 462 803 462.500 803.500 464 804.500 465 803.500 466.500 805 468 803.500 469.500 807 468.500 806 470 807 471 809 472 810.500 471 809.500 473 811 474 810.500 475 812 475.500 811.500 477 813 478 812 479 814.500 478.500 813 480.500 815.500 481 813.500 483 815.500 484.500 814 486 813 487 810 490 807 492 804 493 802 496 801 498.500 800 500 798 499.500 797 501 794 502 791 504 790 507 789 509.500 784 509.500 782.500 512 781.500 510.500 773 510.500 771.500 512.500 771 514 769 516 767 516.500 767 518 770 518 768 519 770 520 768.500 522 768 525 766 526 765 529.500 761 530.500 757 534 754 538 751 541 753 542.500 752 544 746 543.500 745 545 748 546.500 746 548 745.500 550 747 551.500 745 552.500 745 554 743 556.500 738 557 737 555 734 554.500 736 557 734 559 734.500 562 732.500 564 732.500 567 729 571 727 573 724 574.500 713 575 711 576.500 709 575.500 707 577 705 578.500 706 581 704 580 703 582.500 701 580 699 578.500 700 581 698 580.500 698 582.500 696 581.500 696 583 693 583.500",
];

const App = () => (
  <Window>
    <Global />
    <TitleBar>
      <Icon n="app" />
      <Title>Untitled - ArcMap</Title>
      <WinButtons>
        <PlainButton type="button" aria-label="Minimize"><Icon n="winMin" s={9} /></PlainButton>
        <PlainButton type="button" aria-label="Restore"><Icon n="winMax" s={8} /></PlainButton>
        <PlainButton type="button" aria-label="Close"><Icon n="winClose" s={9} /></PlainButton>
      </WinButtons>
    </TitleBar>

    <Chrome>
      <MenuBar>
        {["File", "Edit", "View", "Bookmarks", "Insert", "Selection", "Geoprocessing", "Customize", "Windows", "Help"].map((m) => (
          <PlainButton key={m} type="button">{m}</PlainButton>
        ))}
      </MenuBar>
      <ToolRow>
        <Bar>
          <Grip />
          <Tools list="newDoc open save print | cut copyGrey paste remove | undo redo | addData v |" />
          <Combo $w={102}>
            <Select aria-label="Map scale"><option>1:3.515,444</option></Select>
            <Icon n="drop" s={10} />
          </Combo>
          <Sep />
          <Tools list="editorBar* | tocWin catalogWin searchWin toolbox python | model" />
          <More />
        </Bar>
      </ToolRow>
      <ToolRow $indent={368}>
        <Bar>
          <Grip />
          <Tools list="pageZoomIn pageZoomOut pagePan pageFull page11 | pageIn pageOut | pageBack pageFwd" />
          <PageCombo $w={41}>
            <ZoomSelect aria-label="Page zoom"><option>100%</option></ZoomSelect>
            <Icon n="drop" s={10} />
          </PageCombo>
          <Sep />
          <Tools list="draft* focus layoutSwap ddp" />
          <More />
        </Bar>
      </ToolRow>
      <ToolRow>
        <Bar>
          <Grip />
          <Tools list="zoomIn zoomOut pan* globe | fixedIn fixedOut | back fwd | selFeat v clearSel | pointer | info bolt popup | measure | binoc route gotoXY | timeGrey | viewer" />
          <More />
        </Bar>
      </ToolRow>
      <ToolRow $indent={14}>
        <Bar $gap={28}>
          <Grip />
          <EditorButton type="button">Editor<Caret /></EditorButton>
          <Sep />
          <Tools list="eTool eToolA | line arc trace v burst | editVert reshape cutPoly split rotate | table sketchProp | createFeat" />
          <More />
        </Bar>
        <Bar>
          <Grip />
          <Tools list="t1 t2 t3 t4 t5 | burst sphere | text7 bookA nodes rect4 hash | poly1 poly2" />
          <More />
        </Bar>
      </ToolRow>
    </Chrome>

    <Body>
      <Dock $w={213}>
        <PanelHead>
          <PanelTitle>Table Of Contents</PanelTitle>
          <PlainButton type="button" aria-label="Auto hide"><Icon n="pin" s={8} /></PlainButton>
          <PlainButton type="button" aria-label="Close panel"><Icon n="close" s={8} /></PlainButton>
        </PanelHead>
        <TocTools><Tools list="listOrder* listSource listVis listSel | options" /></TocTools>
        <Tree>
          <TreeRow $level={0}>
            <Icon n="treeBox" s={11} /><Icon n="layers" s={11} /><NodeName $on>Layers</NodeName>
          </TreeRow>
          <TreeRow $level={1}>
            <Icon n="treeBox" s={11} />
            <CheckWrap>
              <Check type="checkbox" defaultChecked />
              <svg width="9" height="9" viewBox="0 0 9 9"><path d="M2 4.500 4 6.500 7 2.500" fill="none" stroke="#111" strokeWidth="1.300" /></svg>
              <NodeName>Ut</NodeName>
            </CheckWrap>
          </TreeRow>
          <TreeRow $level={3}><Swatch /></TreeRow>
        </Tree>

        <ContextMenu role="menu">
          {menu.map((group, g) => (
            <React.Fragment key={g}>
              {g > 0 && <MenuSep />}
              {group.map((m) => (
                <MenuItem key={m.t} type="button" role="menuitem" disabled={m.off} $hover={m.t === "Add Data..."}>
                  <MenuIcon>{m.i && <Icon n={m.i} />}</MenuIcon>
                  <MenuLabel>{m.t}</MenuLabel>
                  {m.sub && <Icon n="triRight" s={8} />}
                </MenuItem>
              ))}
            </React.Fragment>
          ))}
        </ContextMenu>
        <Tooltip role="tooltip">
          <h3>Add Data</h3>
          <p>Add new data to the map's active<br />data frame.</p>
          <p>Tip: You can also drag data into<br />your map from the Catalog<br />window.</p>
        </Tooltip>
        <Highlight />
      </Dock>

      <MapFrame>
        <Canvas>
          <svg viewBox="239 125 668 503" role="img" aria-label="Map of Utah districts">
            <path d={outline} fill="#f1ddc6" stroke="#8b8682" strokeWidth="1" />
            {borders.map((d) => (
              <path key={d} d={d} fill="none" stroke="#8b8682" strokeWidth="1" strokeLinejoin="round" />
            ))}
          </svg>
        </Canvas>
        <VScroll><Icon n="up" s={11} /><Thumb /><Icon n="down" s={11} /></VScroll>
        <HScroll>
          <ViewButton type="button" aria-label="Data view" $on><Icon n="dataView" s={9} /></ViewButton>
          <ViewButton type="button" aria-label="Layout view"><Icon n="layoutView" s={9} /></ViewButton>
          <Sep />
          <ViewButton type="button" aria-label="Refresh"><Icon n="refresh" s={8} /></ViewButton>
          <ViewButton type="button" aria-label="Pause drawing"><Icon n="pause" s={9} /></ViewButton>
          <Icon n="left" s={11} />
          <HThumb />
          <Icon n="right" s={12} />
        </HScroll>
      </MapFrame>

      <Dock $w={162}>
        <PanelHead $light>
          <PanelTitle>Search</PanelTitle>
          <PlainButton type="button" aria-label="Auto hide"><Icon n="pin" s={8} /></PlainButton>
          <PlainButton type="button" aria-label="Close panel"><Icon n="close" s={8} /></PlainButton>
        </PanelHead>
        <SearchTools>
          <Tools list="backBlue fwd" />
          <Sep $tall />
          <Tools list="home refresh" />
          <Sep $tall />
          <Tools list="options v" />
          <SourceCombo $w={62}>
            <SourceSelect aria-label="Search source"><option>Local Search</option></SourceSelect>
            <Icon n="drop" s={10} />
          </SourceCombo>
        </SearchTools>
        <SearchBody>
          <SearchForm onSubmit={(e) => e.preventDefault()}>
            <Scopes>
              <b>ALL</b>
              {["Maps", "Data", "Tools", "Images"].map((s) => <a key={s} href="#">{s}</a>)}
            </Scopes>
            <QueryRow>
              <Query type="text" aria-label="Search text" />
              <Go type="submit" aria-label="Search"><Icon n="find" s={10} /></Go>
            </QueryRow>
            <Extent><a href="#">Any Extent</a><Icon n="triDown" s={7} /></Extent>
          </SearchForm>
        </SearchBody>
        <Tabs>
          <Tab type="button"><Icon n="catalogWin" />Catalog</Tab>
          <Tab type="button" $on><Icon n="searchWin" />Search</Tab>
        </Tabs>
      </Dock>
    </Body>
    <StatusBar />
  </Window>
);

export default App;
